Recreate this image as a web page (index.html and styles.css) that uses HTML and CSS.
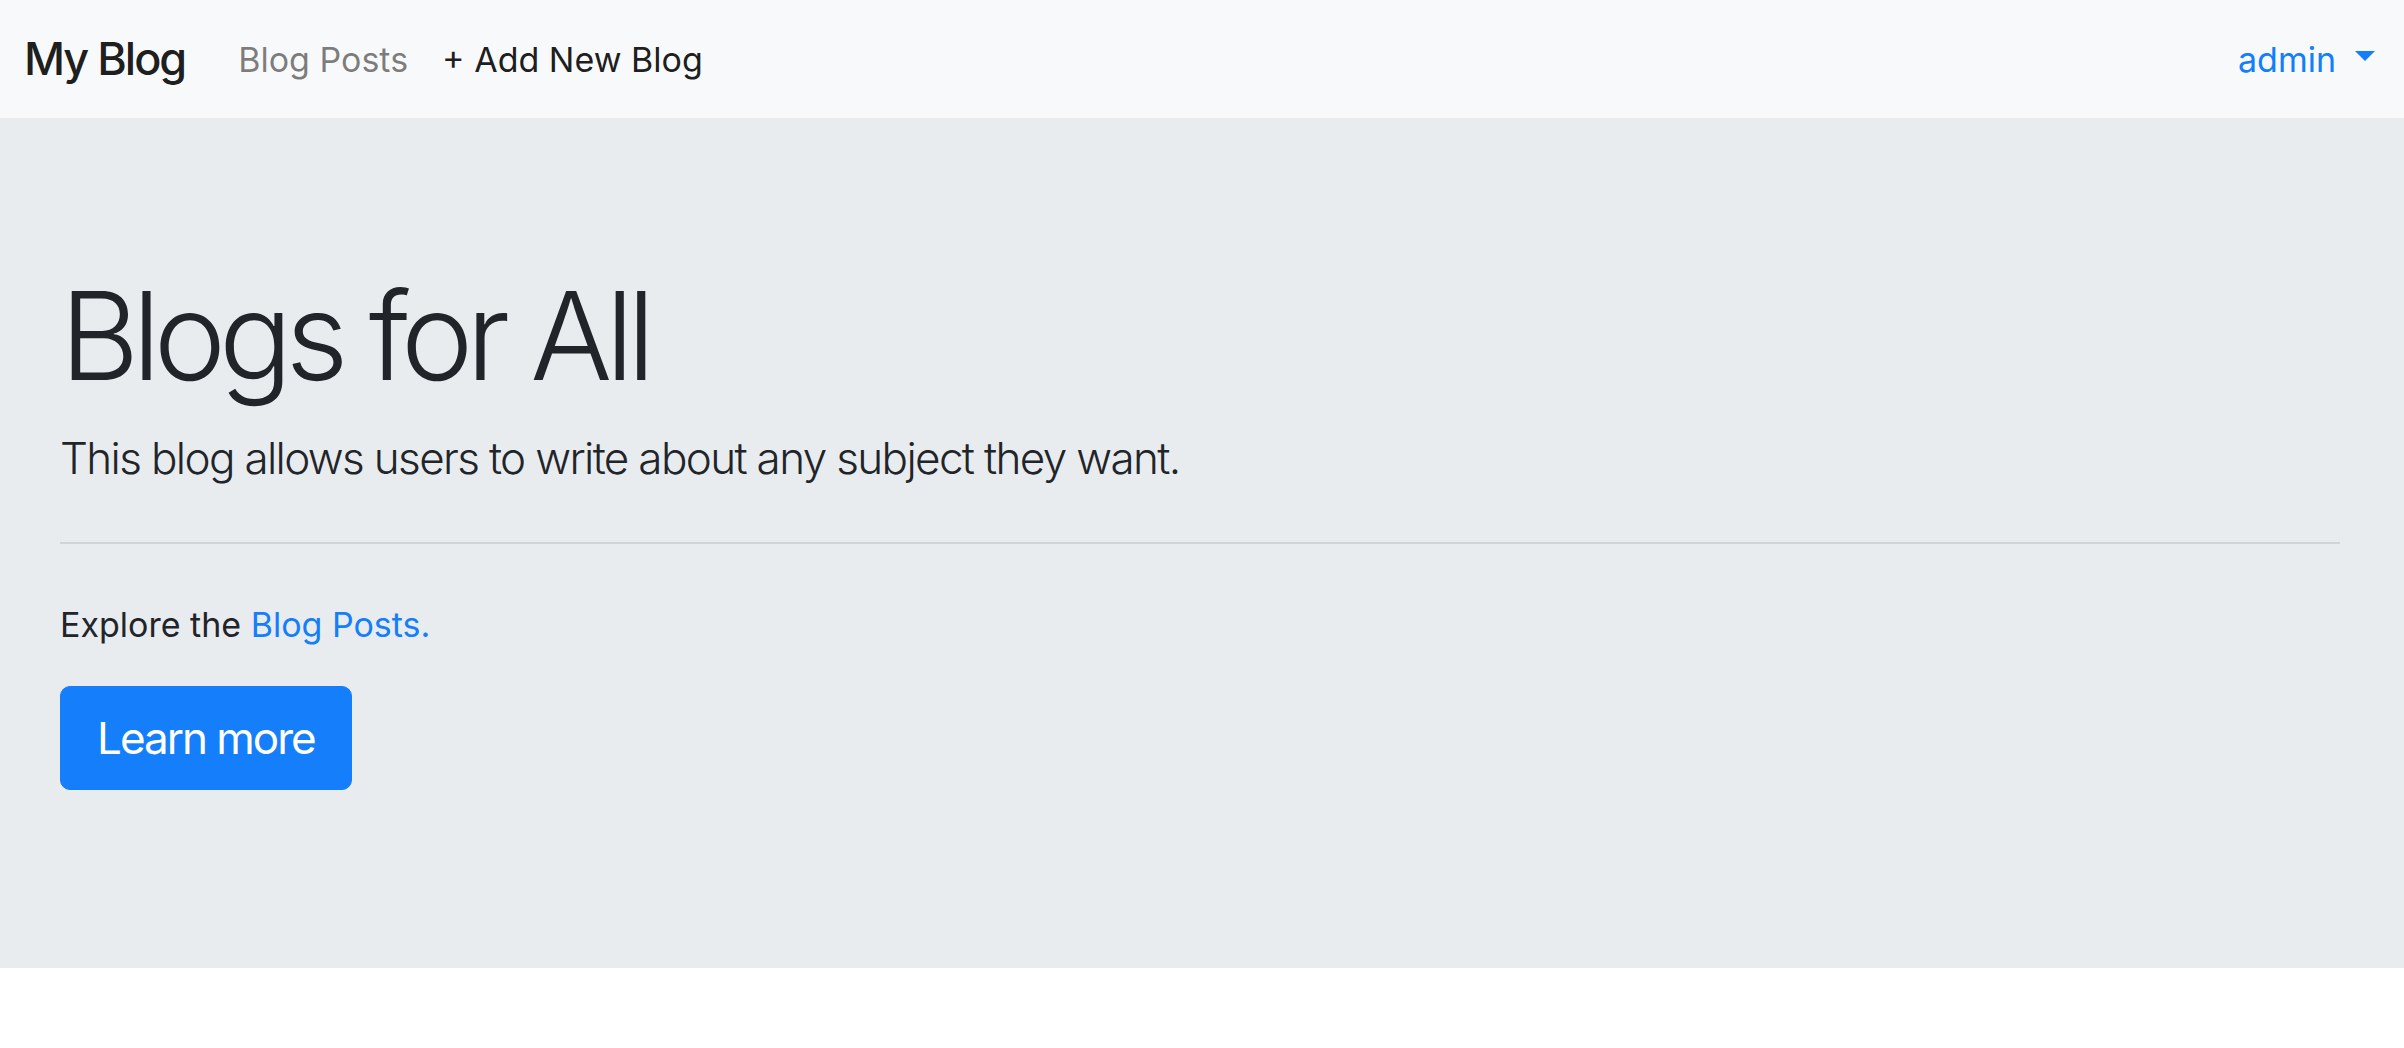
FILE: index.html
```html
<!DOCTYPE html>
<html lang="en">
<head>
<meta charset="utf-8">
<title>My Blog</title>
<link rel="stylesheet" href="styles.css">
</head>
<body>
<nav class="navbar">
  <a class="brand" href="#">My Blog</a>
  <ul class="nav-list">
    <li><a class="nav-link muted" href="#">Blog Posts</a></li>
    <li><a class="nav-link dark" href="#">+ Add New Blog</a></li>
  </ul>
  <a class="nav-link user" href="#">admin<span class="caret"></span></a>
</nav>
<main class="jumbotron">
  <h1 class="display">Blogs for All</h1>
  <p class="lead">This blog allows users to write about any subject they want.</p>
  <hr class="divider">
  <p class="explore">Explore the <a href="#" class="link">Blog Posts.</a></p>
  <p class="actions"><a class="btn" href="#">Learn more</a></p>
</main>
</body>
</html>
```
FILE: styles.css
```css
html, body {
  margin: 0;
  padding: 0;
  background: #ffffff;
}
body {
  font-family: Inter, "Noto Sans", "Liberation Sans", sans-serif;
  color: #212529;
}
a { text-decoration: none; }

.navbar {
  display: flex;
  align-items: center;
  height: 118px;
  padding: 0 29px 0 24px;
  background: #f8f9fa;
  box-sizing: border-box;
}
.brand {
  font-size: 45px;
  line-height: 1.5;
  font-weight: 500;
  letter-spacing: -2px;
  color: rgba(0,0,0,0.9);
  margin-right: 36px;
}
.nav-list {
  display: flex;
  list-style: none;
  margin: 0;
  padding: 0;
  flex: 1;
}
.nav-link {
  display: block;
  font-size: 34px;
  line-height: 1.5;
  padding: 0 17px;
}
.muted { color: rgba(0,0,0,0.5); }
.dark { color: rgba(0,0,0,0.9); }
.user {
  display: flex;
  align-items: center;
  gap: 19px;
  color: #147efb;
  padding: 0;
}
.caret {
  width: 0;
  height: 0;
  border-top: 10px solid #147efb;
  border-left: 10px solid transparent;
  border-right: 10px solid transparent;
  margin-bottom: 6px;
}

.jumbotron {
  display: block;
  background: #e9ecef;
  padding: 145px 64px 178px 60px;
}
.display {
  margin: 0 0 16px;
  font-size: 122px;
  line-height: 1.2;
  font-weight: 300;
  letter-spacing: -7px;
}
.lead {
  margin: 0;
  font-size: 44px;
  line-height: 1.5;
  font-weight: 300;
  letter-spacing: -1.65px;
}
.divider {
  margin: 51px 0 55px;
  border: 0;
  border-top: 2px solid rgba(0,0,0,0.1);
  height: 0;
}
.explore {
  margin: 0 0 36px;
  font-size: 34px;
  line-height: 1.5;
}
.link { color: #147efb; }
.actions { margin: 0; }
.btn {
  display: inline-block;
  font-size: 44px;
  line-height: 1.5;
  letter-spacing: -2px;
  padding: 18px 36px;
  border: 1.5px solid #147efb;
  background: #147efb;
  color: #ffffff;
  border-radius: 10px;
}
```
